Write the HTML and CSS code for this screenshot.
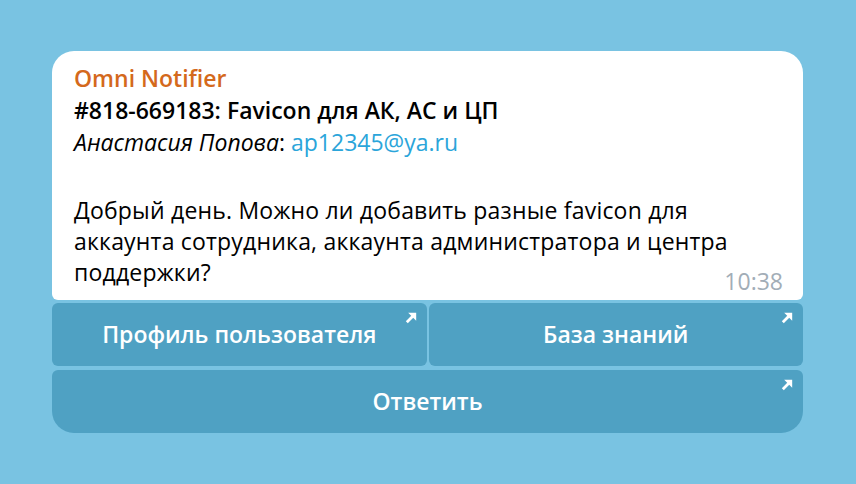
FILE: index.html
```html
<!DOCTYPE html>
<html>
<head>
    <title>Omni Notifier</title>
    <link rel="stylesheet" href="styles.css">
</head>
<body>
    <div class="message">
        <div class="bubble">
            <div class="sender">Omni Notifier</div>
            <div class="subject">#818-669183: Favicon для АК, АС и ЦП</div>
            <div class="author"><em>Анастасия Попова</em>: <a href="#">ap12345@ya.ru</a></div>
            <div class="blank"></div>
            <div class="text">Добрый день. Можно ли добавить разные favicon для аккаунта сотрудника, аккаунта администратора и центра поддержки?</div>
            <span class="time">10:38</span>
        </div>

        <div class="keyboard">
            <div class="kb-row">
                <button class="kb-button">Профиль пользователя
                    <svg class="kb-arrow" viewBox="0 0 12 12"><path class="shaft" d="M1.8 10.2 L8.5 3.5"/><path class="head" d="M3.2 0.8 H11.2 V8.8 Z"/></svg>
                </button>
                <button class="kb-button">База знаний
                    <svg class="kb-arrow" viewBox="0 0 12 12"><path class="shaft" d="M1.8 10.2 L8.5 3.5"/><path class="head" d="M3.2 0.8 H11.2 V8.8 Z"/></svg>
                </button>
            </div>
            <div class="kb-row">
                <button class="kb-button kb-last">Ответить
                    <svg class="kb-arrow" viewBox="0 0 12 12"><path class="shaft" d="M1.8 10.2 L8.5 3.5"/><path class="head" d="M3.2 0.8 H11.2 V8.8 Z"/></svg>
                </button>
            </div>
        </div>
    </div>
</body>
</html>
```

FILE: styles.css
```css
body {
    margin: 0;
    padding: 51px 0 0 52px;
    background-color: #79c3e2;
    font-family: "Open Sans", sans-serif;
    font-size: 23px;
    color: #000;
}

.message {
    width: 751px;
}

.bubble {
    position: relative;
    background-color: #fff;
    border-radius: 22px 22px 6px 6px;
    padding: 11px 22px 12px 22px;
    line-height: 32px;
}

.sender {
    color: #d4691c;
    font-weight: 600;
}

.subject {
    font-weight: 600;
}

.author em {
    font-style: italic;
}

.author a {
    color: #2ba5da;
    text-decoration: none;
}

.blank {
    height: 37px;
}

.text {
    line-height: 31px;
    letter-spacing: 0.2px;
}

.time {
    position: absolute;
    right: 20px;
    bottom: 7px;
    line-height: 23px;
    color: #a2adb7;
}

.keyboard {
    display: flex;
    flex-direction: column;
    gap: 4px;
    margin-top: 3px;
}

.kb-row {
    display: flex;
    gap: 2px;
}

.kb-button {
    position: relative;
    flex: 1;
    height: 63px;
    border: none;
    border-radius: 6px;
    background-color: #4fa1c3;
    color: #fff;
    font-family: "Open Sans", sans-serif;
    font-size: 23px;
    font-weight: 600;
    padding: 0 0 2px 0;
}

.kb-last {
    border-radius: 6px 6px 22px 22px;
}

.kb-arrow {
    position: absolute;
    top: 9px;
    right: 10px;
    width: 12px;
    height: 12px;
}

.kb-arrow .shaft {
    fill: none;
    stroke: #fff;
    stroke-width: 2.8;
}

.kb-arrow .head {
    fill: #fff;
}
```
